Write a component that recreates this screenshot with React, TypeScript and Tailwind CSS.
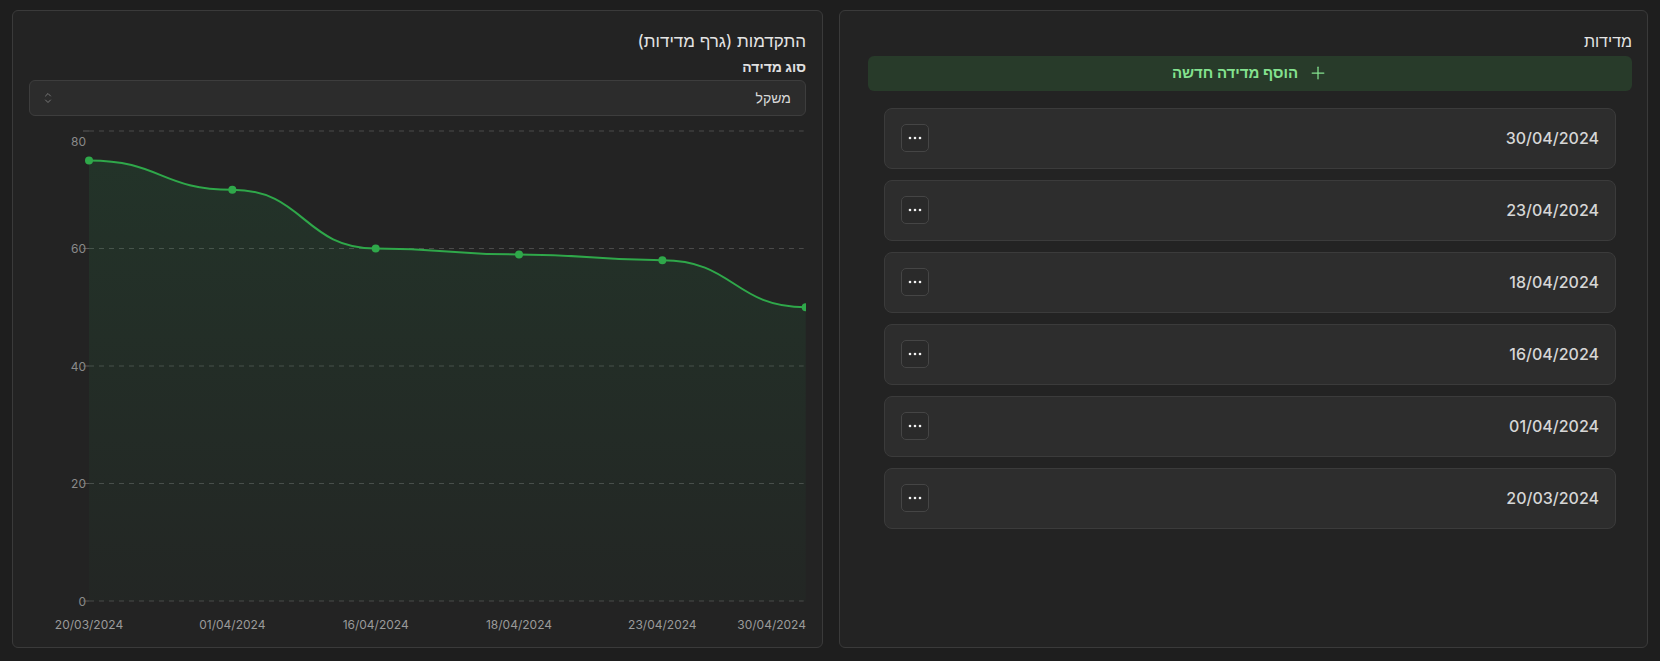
import { Plus } from "lucide-react";

const MEASUREMENTS = ["30/04/2024", "23/04/2024", "18/04/2024", "16/04/2024", "01/04/2024", "20/03/2024"];

const SERIES = [
  { date: "20/03/2024", value: 75 },
  { date: "01/04/2024", value: 70 },
  { date: "16/04/2024", value: 60 },
  { date: "18/04/2024", value: 59 },
  { date: "23/04/2024", value: 58 },
  { date: "30/04/2024", value: 50 },
];

// chart geometry, in svg pixels
const W = 777;
const H = 524;
const PLOT_LEFT = 60;
const PLOT_RIGHT = 776.7;
const Y_TOP = 15; // value 80
const Y_ZERO = 485; // value 0
const Y_MAX = 80;

const xAt = (i: number) => PLOT_LEFT + ((PLOT_RIGHT - PLOT_LEFT) / (SERIES.length - 1)) * i;
const yAt = (v: number) => Y_ZERO - (v / Y_MAX) * (Y_ZERO - Y_TOP);

type Pt = [number, number];

// horizontal tangent at every point (like d3 curveBumpX)
function bumpPath(pts: Pt[]) {
  let d = `M${pts[0][0]},${pts[0][1]}`;
  for (let i = 0; i < pts.length - 1; i++) {
    const [x0, y0] = pts[i];
    const [x1, y1] = pts[i + 1];
    const mx = (x0 + x1) / 2;
    d += `C${mx},${y0},${mx},${y1},${x1},${y1}`;
  }
  return d;
}

function ProgressChart() {
  const pts: Pt[] = SERIES.map((s, i) => [xAt(i), yAt(s.value)]);
  const line = bumpPath(pts);
  const area = `${line}L${pts[pts.length - 1][0]},${Y_ZERO}L${pts[0][0]},${Y_ZERO}Z`;
  const ticks = [80, 60, 40, 20, 0];

  return (
    <svg width={W} height={H} viewBox={`0 0 ${W} ${H}`} className="block" style={{ fontFamily: "Inter, sans-serif" }}>
      <defs>
        <linearGradient id="areaFill" x1="0" y1="0" x2="0" y2="1">
          <stop offset="0%" stopColor="#22c55e" stopOpacity="0.1" />
          <stop offset="100%" stopColor="#22c55e" stopOpacity="0.02" />
        </linearGradient>
      </defs>

      {ticks.map((v) => (
        <g key={v}>
          <line x1={PLOT_LEFT - 6} x2={PLOT_LEFT} y1={yAt(v)} y2={yAt(v)} stroke="#5a5a5a" />
          <line x1={PLOT_LEFT} x2={PLOT_RIGHT - 2} y1={yAt(v)} y2={yAt(v)} stroke="#4a4a4a" strokeDasharray="5 5" />
          <text
            x={PLOT_LEFT - 3}
            y={v === 80 ? yAt(v) + 10 : yAt(v)}
            textAnchor="end"
            dominantBaseline="central"
            fontSize="12"
            fill="#8a8a8a"
          >
            {v}
          </text>
        </g>
      ))}

      <path d={area} fill="url(#areaFill)" />
      <path d={line} fill="none" stroke="#2fa84a" strokeWidth="2" />
      {pts.map(([x, y], i) => (
        <circle key={i} cx={x} cy={y} r="4" fill="#2fa84a" />
      ))}

      {SERIES.map((s, i) => {
        const last = i === SERIES.length - 1;
        return (
          <text
            key={s.date}
            x={last ? W : xAt(i)}
            y={508}
            textAnchor={last ? "end" : "middle"}
            dominantBaseline="central"
            fontSize="12"
            fill="#9a9a9a"
          >
            {s.date}
          </text>
        );
      })}
    </svg>
  );
}

function DotsIcon() {
  return (
    <svg width="14" height="4" viewBox="0 0 14 4" className="block">
      <circle cx="2" cy="2" r="1.3" fill="#f2f2f2" />
      <circle cx="7" cy="2" r="1.3" fill="#f2f2f2" />
      <circle cx="12" cy="2" r="1.3" fill="#f2f2f2" />
    </svg>
  );
}

function ChevronsUpDown() {
  return (
    <svg width="8" height="12" viewBox="0 0 8 12" fill="none" stroke="#777" strokeWidth="1" strokeLinecap="round" strokeLinejoin="round">
      <path d="M1.5 4 4 1.5 6.5 4" />
      <path d="M1.5 8 4 10.5 6.5 8" />
    </svg>
  );
}

export default function App() {
  return (
    <div
      dir="rtl"
      className="min-h-screen bg-[#1e1e1e] px-3 pt-[10px] flex gap-4 text-[#e5e5e5]"
      style={{ fontFamily: 'Inter, "Liberation Sans", sans-serif' }}
    >
      {/* measurements list */}
      <section className="flex-1 h-[638px] rounded-md border border-[#3a3a3a] bg-[#232323] pt-[18px] pr-[15px] pl-[28px]">
        <h2 className="text-base leading-6 text-[#e5e5e5]">מדידות</h2>
        <button className="mt-[2.5px] w-full h-[35px] rounded-md bg-[#283b2a] flex items-center justify-center gap-2.5 text-[15px] font-bold text-[#84e28f]">
          <Plus size={20} strokeWidth={1.5} />
          <span>הוסף מדידה חדשה</span>
        </button>
        <div className="px-4 pt-[17px] flex flex-col gap-[11px]">
          {MEASUREMENTS.map((d) => (
            <div
              key={d}
              className="h-[61px] rounded-lg border border-[#3b3b3b] bg-[#2d2d2d] px-4 flex items-center justify-between"
            >
              <span className="text-base font-medium text-[#d6d6d6]">{d}</span>
              <button className="w-7 h-7 rounded-[5px] border border-[#454545] bg-[#2a2a2a] flex items-center justify-center">
                <DotsIcon />
              </button>
            </div>
          ))}
        </div>
      </section>

      {/* progress chart */}
      <section className="flex-1 h-[638px] rounded-md border border-[#3a3a3a] bg-[#232323] pt-[18px] px-4">
        <h2 className="text-[17px] leading-6 text-[#e5e5e5]">התקדמות (גרף מדידות)</h2>
        <div className="mt-[4px] text-sm leading-5 font-bold text-[#e0e0e0]">סוג מדידה</div>
        <div className="mt-[3px] h-9 rounded-md border border-[#3d3d3d] bg-[#2c2c2c] px-[14px] flex items-center justify-between">
          <span className="text-sm text-[#d8d8d8]">משקל</span>
          <ChevronsUpDown />
        </div>
        <div dir="ltr">
          <ProgressChart />
        </div>
      </section>
    </div>
  );
}
